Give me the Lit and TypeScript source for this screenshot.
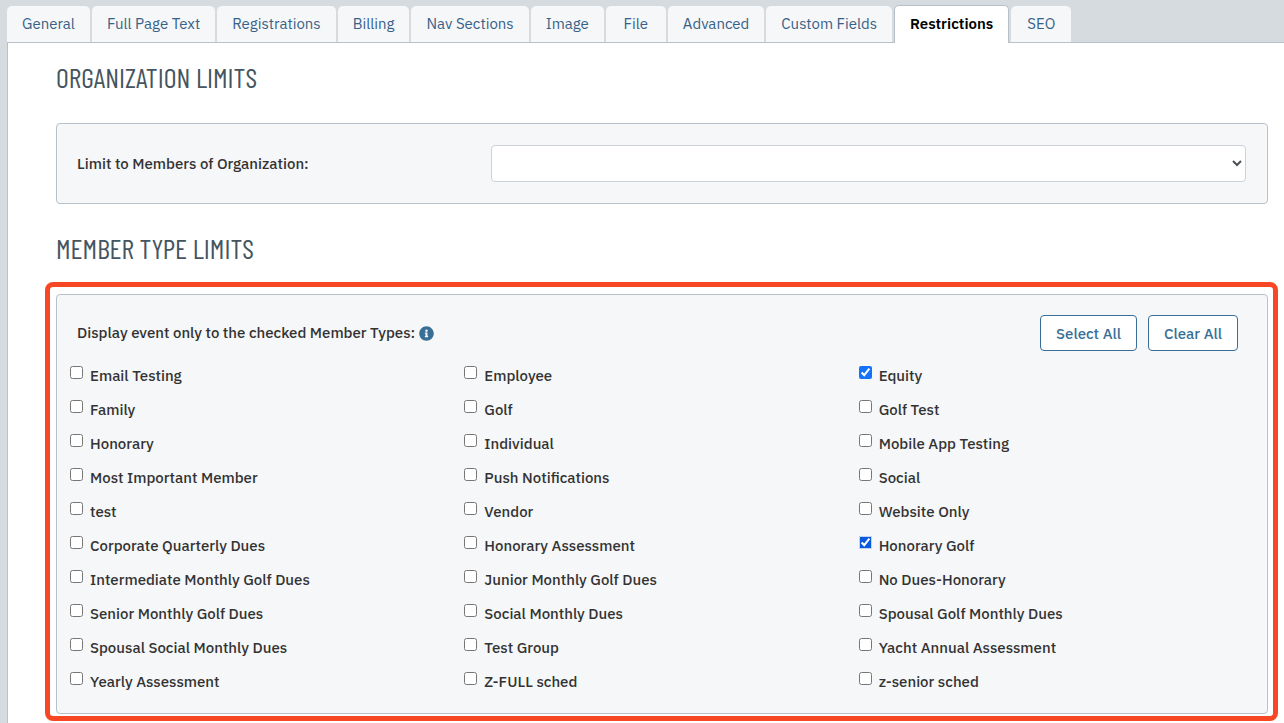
import { LitElement, html, css } from "lit";
import { customElement, state } from "lit/decorators.js";
import { classMap } from "lit/directives/class-map.js";

const TABS = [
  "General",
  "Full Page Text",
  "Registrations",
  "Billing",
  "Nav Sections",
  "Image",
  "File",
  "Advanced",
  "Custom Fields",
  "Restrictions",
  "SEO",
];

const MEMBER_TYPES = [
  "Email Testing", "Employee", "Equity",
  "Family", "Golf", "Golf Test",
  "Honorary", "Individual", "Mobile App Testing",
  "Most Important Member", "Push Notifications", "Social",
  "test", "Vendor", "Website Only",
  "Corporate Quarterly Dues", "Honorary Assessment", "Honorary Golf",
  "Intermediate Monthly Golf Dues", "Junior Monthly Golf Dues", "No Dues-Honorary",
  "Senior Monthly Golf Dues", "Social Monthly Dues", "Spousal Golf Monthly Dues",
  "Spousal Social Monthly Dues", "Test Group", "Yacht Annual Assessment",
  "Yearly Assessment", "Z-FULL sched", "z-senior sched",
];

@customElement("app-root")
export class AppRoot extends LitElement {
  static styles = css`
    :host {
      display: flex;
      flex-direction: column;
      min-height: 100vh;
      background: #d6dbdf;
      color: #333;
      font: 500 15px/24px "IBM Plex Sans", Roboto, sans-serif;
    }
    * { box-sizing: border-box; }

    .tabs {
      display: flex;
      gap: 2px;
      padding: 5px 0 0 7px;
    }
    .tab {
      margin-top: 1px;
      min-width: 60px;
      height: 36px;
      padding: 6px 15px;
      border-radius: 5px 5px 0 0;
      background: #f6f7f9;
      color: #386187;
      font-weight: 400;
      text-align: center;
      text-decoration: none;
      white-space: nowrap;
    }
    .tab.active {
      position: relative;
      z-index: 1;
      margin: 0 0 -1px;
      height: 38px;
      border: 1px solid #b8c1ca;
      border-bottom: 0;
      background: #fff;
      color: #000;
      font-weight: 600;
    }

    .page {
      flex: 1;
      margin-left: 7px;
      padding: 18px 6px 2px 37px;
      border: 1px solid #b8c1ca;
      border-width: 1px 0 0 1px;
      background: #fff;
    }
    h2 {
      margin: 0 0 30px 11px;
      color: #455560;
      font: 400 28px/32px "Barlow Condensed", "Roboto Condensed", sans-serif;
      text-transform: uppercase;
    }
    .panel {
      border: 1px solid #b8c1ca;
      border-radius: 4px;
      background: #f6f7f9;
    }

    .organization {
      display: grid;
      grid-template-columns: 414fr 755fr;
      align-items: center;
      margin: 0 10px 28px 11px;
      padding: 21px 21px 21px 20px;
    }
    select {
      width: 100%;
      height: 37px;
      border: 1px solid #ced2d6;
      border-radius: 4px;
      background: #fff;
      color: #495057;
      font: inherit;
    }

    .highlight {
      margin-top: -12px;
      padding: 7px 5px 2px 6px;
      border: 5px solid #f74724;
      border-radius: 8px;
    }
    .members { padding: 20px 14px 10px 13px; }
    .toolbar {
      display: flex;
      align-items: center;
      gap: 11px;
      padding: 0 15px 0 7px;
    }
    .prompt {
      display: flex;
      align-items: center;
      gap: 4px;
      flex: 1;
      line-height: 26px;
    }
    .info { width: 15px; height: 15px; }
    button {
      height: 36px;
      padding: 1px 15px 0;
      border: 1px solid #396f97;
      border-radius: 4px;
      background: #fff;
      color: #396f97;
      font: inherit;
    }

    .types {
      display: grid;
      grid-template-columns: repeat(3, 1fr);
      margin-top: 12px;
    }
    .type {
      display: flex;
      gap: 7px;
      height: 34px;
      line-height: 26px;
    }
    .type input {
      width: 13px;
      height: 13px;
      margin: 3px 0 0;
      accent-color: #1473fb;
    }
    .type input.current {
      accent-color: #0a5bdc;
      outline: 1px solid #c3d3f8;
      outline-offset: -1px;
      border-radius: 3px;
    }
  `;

  @state() private checked = new Set(["Equity", "Honorary Golf"]);
  @state() private current = "Honorary Golf";

  private toggle(name: string) {
    const next = new Set(this.checked);
    if (!next.delete(name)) next.add(name);
    this.checked = next;
    this.current = name;
  }

  render() {
    return html`
      <nav class="tabs">
        ${TABS.map(
          (t) => html`<a href="#" class=${classMap({ tab: true, active: t === "Restrictions" })}>${t}</a>`
        )}
      </nav>
      <main class="page">
        <h2>Organization Limits</h2>
        <section class="panel organization">
          <label for="organization">Limit to Members of Organization:</label>
          <select id="organization"><option></option></select>
        </section>

        <h2>Member Type Limits</h2>
        <div class="highlight">
          <section class="panel members">
            <div class="toolbar">
              <span class="prompt">
                Display event only to the checked Member Types:
                <svg class="info" viewBox="0 0 512 512" aria-hidden="true">
                  <path fill="#396f97" d="M256 8C119 8 8 119 8 256s111 248 248 248 248-111 248-248S393 8 256 8zm0 110a42 42 0 1 1 0 84 42 42 0 1 1 0-84zm56 254c0 7-5 12-12 12h-88c-7 0-12-5-12-12v-24c0-7 5-12 12-12h12v-64h-12c-7 0-12-5-12-12v-24c0-7 5-12 12-12h64c7 0 12 5 12 12v100h12c7 0 12 5 12 12v24z"/>
                </svg>
              </span>
              <button type="button" @click=${() => (this.checked = new Set(MEMBER_TYPES))}>Select All</button>
              <button type="button" @click=${() => (this.checked = new Set())}>Clear All</button>
            </div>
            <div class="types">
              ${MEMBER_TYPES.map(
                (name) => html`<label class="type"
                  ><input
                    type="checkbox"
                    class=${classMap({ current: name === this.current })}
                    .checked=${this.checked.has(name)}
                    @change=${() => this.toggle(name)}
                  /><span>${name}</span></label
                >`
              )}
            </div>
          </section>
        </div>
      </main>
    `;
  }
}
